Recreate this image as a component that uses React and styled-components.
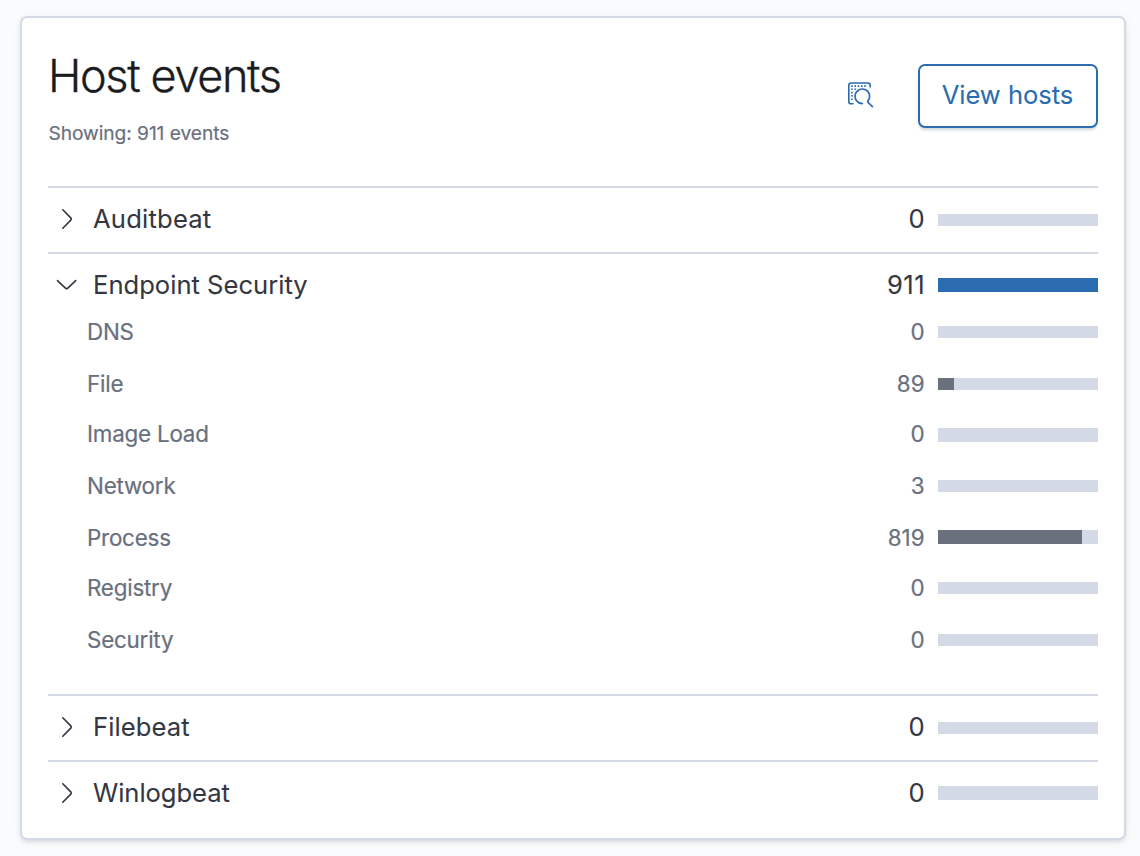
import React from "react";
import styled, { createGlobalStyle } from "styled-components";

const GlobalStyle = createGlobalStyle`
  * { box-sizing: border-box; }
  body { margin: 0; background: #fafbfd; font-family: Inter, "Liberation Sans", sans-serif; color: #343741; -webkit-text-stroke: 0.08px; }
`;

const Page = styled.main`
  height: 856px;
  padding: 16px 14px 16px 20px;
  overflow: hidden;
`;

const Panel = styled.section`
  height: 824px;
  padding: 26px;
  background: #fff;
  border: 2px solid #d3dae6;
  border-radius: 7px;
  box-shadow: 0 3px 4px -1px rgba(152, 162, 179, 0.3), 0 1px 10px -2px rgba(152, 162, 179, 0.2);
`;

const Header = styled.header`
  display: flex;
  height: 142px;
`;

const Heading = styled.div`
  flex: 1;
  padding-top: 2px;
`;

const Title = styled.h2`
  margin: 0;
  font-size: 45px;
  font-weight: 300;
  line-height: 60px;
  letter-spacing: -0.03em;
  color: #1a1c21;
  -webkit-text-stroke: 0.35px;
`;

const Subtitle = styled.p`
  margin: 15px 0 0;
  padding-left: 0.5px;
  font-size: 19.2px;
  line-height: 24px;
  letter-spacing: -0.07px;
  color: #69707d;
  -webkit-text-stroke: 0.2px;
`;

const InspectButton = styled.button`
  width: 28px;
  height: 28px;
  margin: 37px 44px 0 0;
  padding: 0;
  border: 0;
  background: none;
  svg { display: block; }
`;

const ViewButton = styled.button`
  width: 180px;
  height: 64px;
  margin-top: 20px;
  padding: 0 1px 2px 0;
  border: 2px solid #2b6cb0;
  border-radius: 7px;
  background: #fff;
  color: #2b6cb0;
  font: 400 25.6px/40px Inter, sans-serif;
  letter-spacing: -0.05px;
  box-shadow: 0 3px 3px -1px rgba(54, 97, 126, 0.25);
`;

const Group = styled.div`
  height: ${(p) => (p.$open ? "442px" : "66px")};
  border-top: 2px solid #d3dae6;
`;

const GroupRow = styled.div`
  display: flex;
  align-items: flex-start;
  height: 63px;
  padding: 12px 0 0 5px;
  font-size: 25.6px;
  line-height: 38px;
`;

const ArrowIcon = styled.svg`
  flex: none;
  width: 28px;
  height: 28px;
  margin: 5px 12px 0 0;
`;

const SubRow = styled.div`
  display: flex;
  height: ${(p) => p.$height}px;
  padding-left: 39px;
  font-size: 22.4px;
  line-height: 30px;
  letter-spacing: -0.22px;
  color: #69707d;
  -webkit-text-stroke: 0.2px;
`;

const Label = styled.span`
  flex: 1;
  letter-spacing: ${(p) => p.$tracking || "inherit"};
`;

const Count = styled.span`
  margin-right: ${(p) => (p.$primary ? "13px" : "13.4px")};
  letter-spacing: ${(p) => (p.$primary ? "0.4px" : "0")};
`;

const Track = styled.div`
  width: 160px;
  height: ${(p) => p.$height}px;
  margin-top: ${(p) => p.$top}px;
  background: #d3dae6;
`;

const Fill = styled.div`
  height: 100%;
  background: ${(p) => (p.$primary ? "#2b6cb0" : "#6a717d")};
`;

const groups = [
  { name: "Auditbeat", count: 0, top: 14, bar: 12, tracking: "0.2px" },
  {
    name: "Endpoint Security",
    count: 911,
    top: 12,
    bar: 14,
    fill: 160,
    items: [
      { name: "DNS", count: 0, height: 52, top: 9, bar: 12 },
      { name: "File", count: 89, height: 50, top: 9, bar: 12, fill: 16 },
      { name: "Image Load", count: 0, height: 52, top: 9, bar: 14 },
      { name: "Network", count: 3, height: 52, top: 9, bar: 12 },
      { name: "Process", count: 819, height: 50, top: 7, bar: 14, fill: 144 },
      { name: "Registry", count: 0, height: 52, top: 9, bar: 12 },
      { name: "Security", count: 0, height: 50, top: 9, bar: 12 },
    ],
  },
  { name: "Filebeat", count: 0, top: 14, bar: 12, tracking: "0.1px" },
  { name: "Winlogbeat", count: 0, top: 12, bar: 14, tracking: "-0.05px" },
];

function Arrow({ open }) {
  return (
    <ArrowIcon viewBox="0 0 28 28" fill="none" stroke="#343741" strokeWidth="1.6" strokeLinecap="round" strokeLinejoin="round">
      <path d={open ? "M4.5 9.6 L12.7 17.3 Q13.6 18 14.5 17.3 L22.7 9.6" : "M9.8 4.8 L18 13.1 Q18.7 14 18 14.9 L9.8 23.2"} />
    </ArrowIcon>
  );
}

function Stat({ item, primary }) {
  return (
    <>
      <Label $tracking={item.tracking}>{item.name}</Label>
      <Count $primary={primary}>{item.count}</Count>
      <Track $height={item.bar} $top={item.top}>
        {item.fill && <Fill $primary={primary} style={{ width: item.fill }} />}
      </Track>
    </>
  );
}

export default function App() {
  return (
    <Page>
      <GlobalStyle />
      <Panel>
        <Header>
          <Heading>
            <Title>Host events</Title>
            <Subtitle>Showing: 911 events</Subtitle>
          </Heading>
          <InspectButton aria-label="Inspect">
            <svg width="28" height="28" viewBox="0 0 28 28" fill="none" stroke="#2b6cb0" strokeWidth="1.6" strokeLinecap="round">
              <path d="M7 22.8 H5.2 Q2.8 22.8 2.8 20.4 V4.4 Q2.8 2 5.2 2 H21.6 Q24.2 2 24.2 4.4 V6" />
              <path d="M5.2 5.1 H20.4" strokeDasharray="1.6 1.65" strokeLinecap="butt" />
              <path d="M5.2 8.3 H11" strokeDasharray="1.6 1.65" strokeLinecap="butt" />
              <path d="M5.2 11.6 H6.8 M5.2 14.9 H6.8 M5.2 18.2 H6.8" strokeLinecap="butt" />
              <path d="M16.4 22.6 A7.3 7.3 0 1 1 21.8 20.1 L21.6 20.9 L26.4 25.6" strokeLinejoin="round" />
            </svg>
          </InspectButton>
          <ViewButton>View hosts</ViewButton>
        </Header>
        {groups.map((group) => (
          <Group key={group.name} $open={!!group.items}>
            <GroupRow>
              <Arrow open={!!group.items} />
              <Stat item={group} primary />
            </GroupRow>
            {group.items?.map((item) => (
              <SubRow key={item.name} $height={item.height}>
                <Stat item={item} />
              </SubRow>
            ))}
          </Group>
        ))}
      </Panel>
    </Page>
  );
}
